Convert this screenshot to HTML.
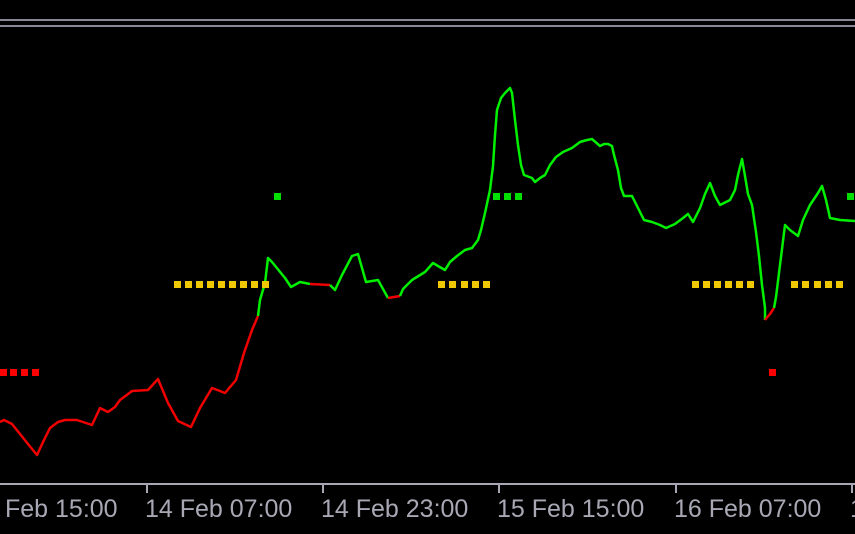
<!DOCTYPE html>
<html><head><style>
html,body{margin:0;padding:0;background:#000;}
body{width:855px;height:534px;position:relative;overflow:hidden;}
.l{position:absolute;top:494px;line-height:30px;font-family:"Liberation Sans",sans-serif;font-size:25px;color:#a8a8b4;white-space:nowrap;}
</style></head><body>
<svg width="855" height="534" style="position:absolute;left:0;top:0">
<rect x="0" y="19" width="855" height="2" fill="#8a8898"/>
<rect x="0" y="25" width="855" height="2" fill="#8a8898"/>
<g stroke="#a8a8b4" stroke-width="2">
<line x1="0" y1="484" x2="855" y2="484"/>
<line x1="147" y1="484" x2="147" y2="493"/>
<line x1="323" y1="484" x2="323" y2="493"/>
<line x1="499" y1="484" x2="499" y2="493"/>
<line x1="676" y1="484" x2="676" y2="493"/>
<line x1="852" y1="484" x2="852" y2="493"/>
</g>
<g fill="none" stroke-width="2.5" stroke-linejoin="round">
<polyline stroke="#f00000" points="0,422 4,420 12,424 20,434 28,444 37,455 44,440 50,428 58,422 65,420 77,420 92,425 100,408 108,412 115,407 120,400 132,391 148,390 158,379 168,403 178,421 191,427 200,408 212,388 225,393 236,380 244,353 252,330 258,316"/>
<polyline stroke="#00f000" points="258,316 260,300 265,283 268,258 272,262 285,278 291,287 300,282 310,284"/>
<polyline stroke="#f00000" points="310,284 330,285"/>
<polyline stroke="#00f000" points="330,285 335,290 342,275 352,256 358,254 366,282 378,280 388,298"/>
<polyline stroke="#f00000" points="388,298 400,296"/>
<polyline stroke="#00f000" points="400,296 403,289 412,280 425,272 433,263 438,266 445,270 450,262 457,256 465,250 472,248 478,240 481,230 485,213 490,190 493,166 495,135 497,110 501,98 505,93 510,88 512,93 515,120 518,145 521,165 524,175 532,178 535,182 540,178 545,175 550,165 556,157 563,152 572,148 580,142 587,140 592,139 600,146 604,144 608,144 612,146 614,155 618,170 621,188 624,196 632,196 635,202 640,212 644,220 652,222 660,225 666,228 675,224 683,218 688,214 693,222 700,208 705,194 710,183 715,196 720,205 730,200 735,190 738,175 742,159 745,176 748,194 752,205 756,232 759,256 762,285 765,308 765,320"/>
<polyline stroke="#f00000" points="765,320 770,314 774,308"/>
<polyline stroke="#00f000" points="774,308 776,297 780,265 785,225 790,230 798,236 803,220 810,205 818,193 822,186 826,200 830,218 840,220 855,221"/>
</g>
<g fill="#f0c800">
<rect x="174" y="281" width="7" height="7"/><rect x="185" y="281" width="7" height="7"/><rect x="196" y="281" width="7" height="7"/><rect x="207" y="281" width="7" height="7"/><rect x="218" y="281" width="7" height="7"/><rect x="229" y="281" width="7" height="7"/><rect x="240" y="281" width="7" height="7"/><rect x="251" y="281" width="7" height="7"/><rect x="262" y="281" width="7" height="7"/>
<rect x="438" y="281" width="7" height="7"/><rect x="449" y="281" width="7" height="7"/><rect x="461" y="281" width="7" height="7"/><rect x="472" y="281" width="7" height="7"/><rect x="483" y="281" width="7" height="7"/>
<rect x="692" y="281" width="7" height="7"/><rect x="703" y="281" width="7" height="7"/><rect x="714" y="281" width="7" height="7"/><rect x="725" y="281" width="7" height="7"/><rect x="736" y="281" width="7" height="7"/><rect x="747" y="281" width="7" height="7"/>
<rect x="791" y="281" width="7" height="7"/><rect x="802" y="281" width="7" height="7"/><rect x="814" y="281" width="7" height="7"/><rect x="825" y="281" width="7" height="7"/><rect x="836" y="281" width="7" height="7"/>
</g>
<g fill="#00e000">
<rect x="493" y="193" width="7" height="7"/><rect x="504" y="193" width="7" height="7"/><rect x="515" y="193" width="7" height="7"/>
<rect x="274" y="193" width="7" height="7"/><rect x="847" y="193" width="7" height="7"/>
</g>
<g fill="#ff0000">
<rect x="0" y="369" width="7" height="7"/><rect x="10" y="369" width="7" height="7"/><rect x="21" y="369" width="7" height="7"/><rect x="32" y="369" width="7" height="7"/>
<rect x="769" y="369" width="7" height="7"/>
</g>
</svg>
<div class="l" style="left:5px">Feb 15:00</div>
<div class="l" style="left:145px">14 Feb 07:00</div>
<div class="l" style="left:321px">14 Feb 23:00</div>
<div class="l" style="left:497px">15 Feb 15:00</div>
<div class="l" style="left:674px">16 Feb 07:00</div>
<div class="l" style="left:850px">1</div>
</body></html>
